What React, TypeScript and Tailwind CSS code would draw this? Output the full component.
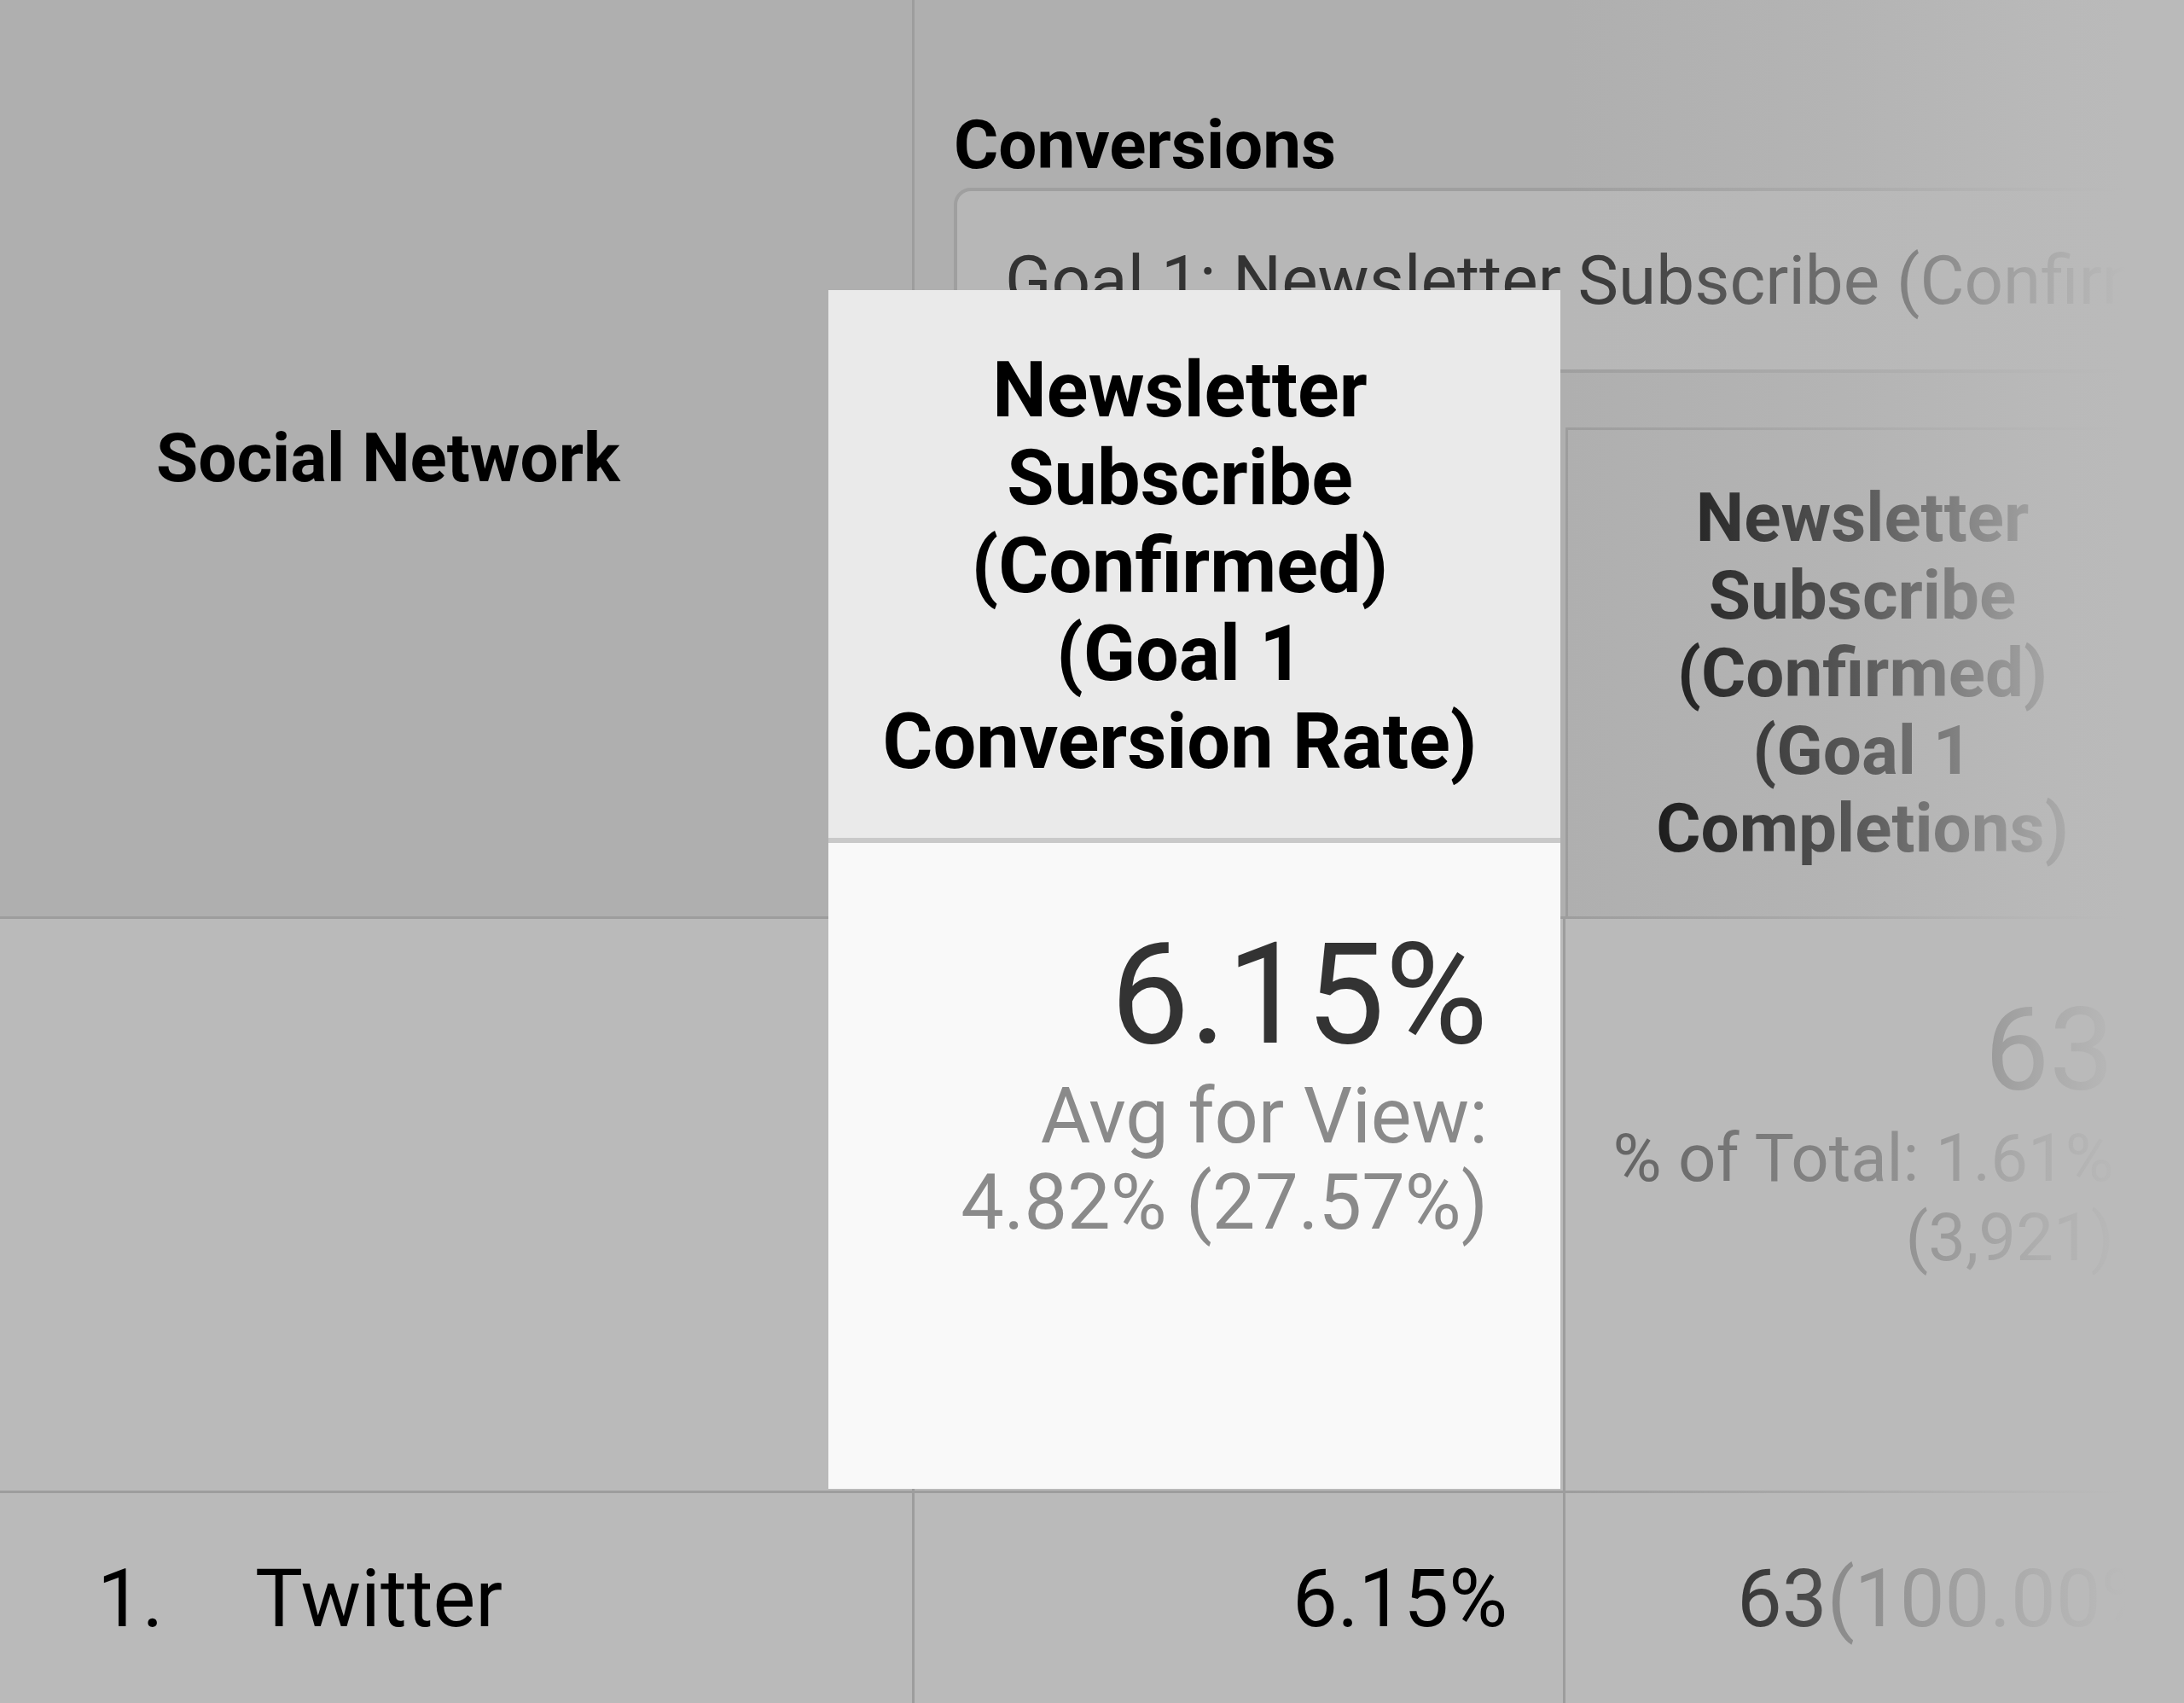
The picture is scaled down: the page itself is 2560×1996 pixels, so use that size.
const line = "border-[#9d9d9d]";

function SummaryCard() {
  return (
    <div className="absolute left-[971px] top-[340px] flex h-[1405px] w-[858px] flex-col">
      <div className="flex h-[642px] flex-col items-center justify-center bg-[#eaeaea] pr-[34px] pt-[4px] text-center text-[90px] font-bold leading-[103px] text-black">
        <span>Newsletter</span>
        <span>Subscribe</span>
        <span>(Confirmed)</span>
        <span>(Goal 1</span>
        <span>Conversion Rate)</span>
      </div>
      <div className="h-[6px] bg-[#c9c9c9]" />
      <div className="flex flex-1 flex-col items-end bg-[#f9f9f9] pr-[85px] pt-[98px]">
        <span className="text-[165px] leading-[160px] text-[#333]">6.15%</span>
        <span className="mt-[12px] text-right text-[90px] leading-[101px] text-[#8a8a8a]">
          Avg for View:
          <br />
          4.82% (27.57%)
        </span>
      </div>
    </div>
  );
}

export default function App() {
  return (
    <div className="relative h-[1996px] w-[2560px] overflow-hidden bg-[#bababa] font-['Roboto','Liberation_Sans',sans-serif]">
      {/* header */}
      <div className={`flex h-[1077px] border-b-[3px] bg-[#afafaf] ${line}`}>
        <div className={`flex w-[1072px] shrink-0 items-center border-r-[3px] pl-[183px] ${line}`}>
          <span className="text-[80px] font-bold leading-[84px] text-black">Social Network</span>
        </div>
        <div className="flex min-w-0 flex-1 flex-col">
          <div className="h-[501px] pl-[46px] pt-[120px]">
            <div className="text-[80px] font-bold leading-[100px] text-black">Conversions</div>
            <div className="flex h-[217px] w-[1600px] items-center overflow-hidden rounded-[20px] border-[4px] border-[#9f9f9f] bg-[#b7b7b7] pl-[56px]">
              <span className="whitespace-nowrap text-[80px] leading-[84px] text-[#333]">
                Goal 1: Newsletter Subscribe (Confirmed)
              </span>
            </div>
          </div>
          <div className="flex flex-1">
            <div className="w-[763px] shrink-0" />
            <div className={`flex flex-1 flex-col items-center justify-center border-l-[3px] border-t-[3px] pr-[32px] text-center text-[80px] font-bold leading-[91px] text-black ${line}`}>
              <span>Newsletter</span>
              <span>Subscribe</span>
              <span>(Confirmed)</span>
              <span>(Goal 1</span>
              <span>Completions)</span>
            </div>
          </div>
        </div>
      </div>

      {/* summary row */}
      <div className={`flex h-[673px] border-b-[3px] ${line}`}>
        <div className={`w-[1072px] shrink-0 border-r-[3px] ${line}`} />
        <div className={`w-[763px] shrink-0 border-r-[3px] ${line}`} />
        <div className="flex flex-1 flex-col items-end pr-[82px] pt-[84px]">
          <span className="text-[135px] leading-[140px] text-[#333]">63</span>
          <span className="mt-[10px] whitespace-nowrap text-right text-[78px] leading-[93px] text-[#5c5c5c]">
            % of Total: 1.61%
            <br />
            (3,921)
          </span>
        </div>
      </div>

      {/* data row */}
      <div className="flex h-[300px] text-[94px] leading-[95px] text-black">
        <div className={`flex w-[1072px] shrink-0 border-r-[3px] pl-[114px] pt-[77px] ${line}`}>
          <span className="w-[185px]">1.</span>
          <span>Twitter</span>
        </div>
        <div className={`w-[763px] shrink-0 border-r-[3px] pr-[65px] pt-[77px] text-right ${line}`}>6.15%</div>
        <div className="flex-1 whitespace-nowrap pl-[201px] pt-[77px]">
          63<span className="text-[#666]">(100.00%)</span>
        </div>
      </div>

      {/* right-side fade */}
      <div className="pointer-events-none absolute inset-y-0 left-[1832px] right-0 bg-[linear-gradient(to_right,rgba(186,186,186,0)_0px,rgba(186,186,186,0.5)_360px,rgba(186,186,186,0.88)_560px,#bababa_660px)]" />

      <SummaryCard />
    </div>
  );
}
